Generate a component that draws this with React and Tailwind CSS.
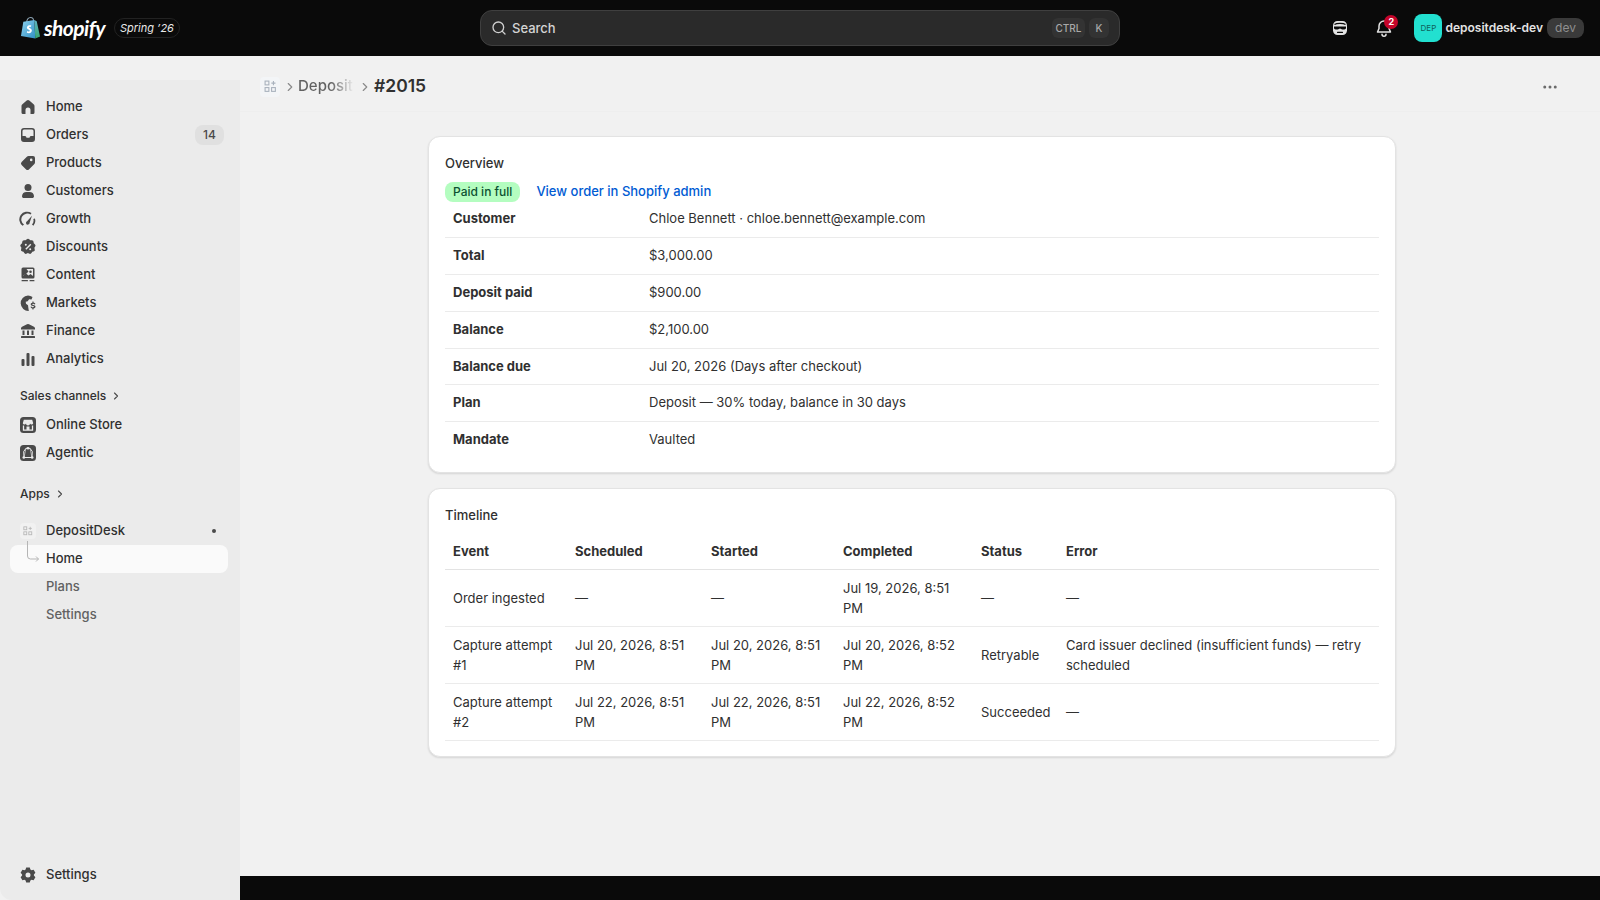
import { ChevronRight, MoreHorizontal, Search } from 'lucide-react';

const font = { fontFamily: 'Inter, "Liberation Sans", sans-serif' };

// Polaris-like icons, drawn by hand on a 20x20 box
function Ico({ children }) {
  return (
    <svg viewBox="0 0 20 20" className="w-5 h-5 shrink-0 text-[#4a4a4a]" fill="currentColor">
      {children}
    </svg>
  );
}

const icons = {
  home: <path d="M8.700 3.500a2 2 0 0 1 2.600 0l4.300 3.700c.6.500.9 1.100.9 1.900v6.400a1.500 1.500 0 0 1-1.500 1.500h-2.500v-3.900a2.500 2.500 0 0 0-5 0V17H5a1.500 1.500 0 0 1-1.500-1.500V9.100c0-.8.300-1.400.9-1.900z" />,
  orders: <path fillRule="evenodd" d="M6 3h8a3 3 0 0 1 3 3v8a3 3 0 0 1-3 3H6a3 3 0 0 1-3-3V6a3 3 0 0 1 3-3m-1.500 8v-5A1.500 1.500 0 0 1 6 4.500h8A1.500 1.500 0 0 1 15.500 6v5h-2.600a1 1 0 0 0-.9.600l-.3.600a1 1 0 0 1-.9.600H9.200a1 1 0 0 1-.9-.6l-.3-.6a1 1 0 0 0-.9-.6z" />,
  products: <path fillRule="evenodd" d="M10.500 3H15a2 2 0 0 1 2 2v4.500a2 2 0 0 1-.6 1.400l-5.500 5.500a2 2 0 0 1-2.800 0l-4.500-4.500a2 2 0 0 1 0-2.800l5.500-5.500a2 2 0 0 1 1.400-.6M13.200 8.200a1.300 1.300 0 1 0 0-2.600 1.300 1.300 0 0 0 0 2.600" />,
  customers: (
    <>
      <circle cx="10" cy="6.500" r="3.500" />
      <path d="M4 15.200c0-2.600 2-4.200 4.500-4.200h3c2.500 0 4.500 1.600 4.500 4.200 0 1-.8 1.800-1.800 1.800H5.800C4.800 17 4 16.200 4 15.200" />
    </>
  ),
  growth: (
    <>
      <path d="M4.600 16.800A7.400 7.400 0 0 1 13.500 4.100l-.9 1.500A5.700 5.700 0 0 0 6 15.600zM15.400 16.800l-1.400-1.200a5.700 5.700 0 0 0 1.300-5.600l1.600-.5a7.400 7.400 0 0 1-1.500 7.300" />
      <path d="M14 6.800l-2.400 6.900a1.800 1.800 0 1 1-2.500-1.500z" />
    </>
  ),
  discounts: (
    <path fillRule="evenodd" d="M8.500 2.500a2 2 0 0 1 3 0l.8.800 1.100-.1a2 2 0 0 1 2.200 1.900l.1 1.200.9.700a2 2 0 0 1 .4 2.900l-.7.900.4 1.100a2 2 0 0 1-1.300 2.600l-1.100.3-.6 1a2 2 0 0 1-2.800.7l-1-.6-1 .6a2 2 0 0 1-2.800-.7l-.6-1-1.100-.3a2 2 0 0 1-1.300-2.600l.4-1.100-.7-.9a2 2 0 0 1 .4-2.900l.9-.7.100-1.200a2 2 0 0 1 2.200-1.900l1.100.1zM12.300 6.800l-5 5 1 1 5-5zM7.800 8.800a1 1 0 1 0 0-2 1 1 0 0 0 0 2m4.400 4.400a1 1 0 1 0 0-2 1 1 0 0 0 0 2" />
  ),
  content: (
    <>
      <path fillRule="evenodd" d="M5 2.500h10A1.500 1.500 0 0 1 16.500 4v8a1.500 1.500 0 0 1-1.500 1.500H5A1.500 1.500 0 0 1 3.500 12V4A1.500 1.500 0 0 1 5 2.500M5 4v7l3-2.500 2.500 2 2-1.500 2.500 2V4zM12.500 8a1.300 1.300 0 1 0 0-2.600 1.300 1.300 0 0 0 0 2.600" />
      <path d="M5 4h3.500l2 2.500-2 2L5 11z" />
      <rect x="3.500" y="15" width="6.500" height="1.300" rx=".6" />
      <rect x="11.500" y="15" width="5" height="1.300" rx=".6" />
    </>
  ),
  markets: (
    <>
      <path d="M10 2.500a7.500 7.500 0 0 1 4.500 1.500l-1 2.400-2.400-.2-1.400 2-2 .5.300 2 2 1.600.3 2.200.5 3.400A7.500 7.500 0 1 1 10 2.500" />
      <path d="M15.500 8.500v1.100c1 .2 1.700.7 1.900 1.500l-1.200.4c-.2-.5-.5-.7-1.100-.7-.5 0-.9.200-.9.500 0 .4.400.5 1.100.7 1 .2 2.200.6 2.200 1.800 0 .9-.7 1.500-2 1.700v1h-1.100v-1c-1.100-.2-1.800-.8-2-1.700l1.200-.4c.2.600.6.900 1.300.9.600 0 1.100-.2 1.100-.5 0-.4-.5-.5-1.200-.7-1-.2-2.100-.6-2.100-1.800 0-.8.600-1.400 1.700-1.600V8.500z" />
    </>
  ),
  finance: (
    <>
      <path d="M9 3.200a2 2 0 0 1 2 0l5 2.600c.6.300 1 .9 1 1.500V8.500H3V7.300c0-.6.400-1.200 1-1.500z" />
      <rect x="4.500" y="9.500" width="2" height="4.500" />
      <rect x="9" y="9.500" width="2" height="4.500" />
      <rect x="13.500" y="9.500" width="2" height="4.500" />
      <rect x="3" y="15" width="14" height="2" rx=".5" />
    </>
  ),
  analytics: (
    <>
      <rect x="3.500" y="10" width="3" height="7" rx="1" />
      <rect x="8.500" y="4" width="3" height="13" rx="1" />
      <rect x="13.500" y="7" width="3" height="10" rx="1" />
    </>
  ),
  settings: (
    <path fillRule="evenodd" d="M8.200 2.500h3.600l.6 2.100 1.100.6 2.100-.5 1.800 3.100-1.500 1.600v1.200l1.500 1.600-1.800 3.100-2.100-.5-1.100.6-.6 2.100H8.200l-.6-2.100-1.100-.6-2.100.5-1.800-3.100 1.500-1.600V9.400L2.600 7.800l1.800-3.100 2.100.5 1.100-.6zM10 12.500a2.500 2.500 0 1 0 0-5 2.500 2.500 0 0 0 0 5" />
  ),
};

function StoreIcon() {
  return (
    <svg viewBox="0 0 20 20" className="w-5 h-5 shrink-0">
      <rect x="2" y="2" width="16" height="16" rx="3.500" fill="#4a4a4a" />
      <path d="M5.800 4.800h8.400l1 3.400a1.700 1.700 0 0 1-3.200.3 2 2 0 0 1-4 0 1.700 1.700 0 0 1-3.200-.3z" fill="#ebebeb" />
      <path d="M5.500 10.500v4.700h9v-4.700" fill="none" stroke="#ebebeb" strokeWidth="1.300" />
      <rect x="8.500" y="11.500" width="3" height="3.500" fill="#ebebeb" />
    </svg>
  );
}

function AgenticIcon() {
  return (
    <svg viewBox="0 0 20 20" className="w-5 h-5 shrink-0">
      <rect x="2" y="2" width="16" height="16" rx="3.500" fill="#4a4a4a" />
      <path d="M8 5.300h4l2.300 3.200-.3 6H6l-.3-6z" fill="none" stroke="#ebebeb" strokeWidth="1" />
      <path d="M8 5.300l-2 9M12 5.300l2 9" fill="none" stroke="#ebebeb" strokeWidth=".6" />
      <circle cx="10" cy="5.300" r="1.300" fill="#ebebeb" />
      <circle cx="5.800" cy="14.500" r="1.300" fill="#ebebeb" />
      <circle cx="14.200" cy="14.500" r="1.300" fill="#ebebeb" />
    </svg>
  );
}

// little squares-and-plus glyph used for the app tile
function AppGlyph({ color, size }) {
  return (
    <svg viewBox="0 0 12 12" width={size} height={size} fill="none" stroke={color} strokeWidth="1">
      <rect x="1" y="1" width="3.500" height="3.500" />
      <rect x="1" y="7" width="3.500" height="3.500" />
      <rect x="7" y="7" width="3.500" height="3.500" />
      <path d="M8.700 1v3.800M6.800 2.900h3.800" />
    </svg>
  );
}

function ShopifyBag() {
  return (
    <svg viewBox="0 0 22 24" className="w-[21px] h-[24px]">
      <defs>
        <linearGradient id="bagL" x1="0" y1="0" x2="1" y2="1">
          <stop offset="0" stopColor="#8fd3ee" />
          <stop offset="1" stopColor="#2f8fc4" />
        </linearGradient>
        <linearGradient id="bagR" x1="0" y1="0" x2="0" y2="1">
          <stop offset="0" stopColor="#5fb4c4" />
          <stop offset="1" stopColor="#39a56f" />
        </linearGradient>
      </defs>
      <path d="M7 6c0-3 1.800-5 4-5s3.500 2 3.500 5" fill="none" stroke="#8aa0b0" strokeWidth="1.100" />
      <path d="M3.500 5.500L15 3.500 16 23 1 20.500z" fill="url(#bagL)" />
      <path d="M15 3.500l2.500 1.500L21 21l-5 2z" fill="url(#bagR)" />
      <path d="M11.800 9.500c-.6-.4-1.300-.5-2-.4-1.700.2-2.700 1.400-2.600 2.600.2 2 3 2 3.100 3.200.1.700-.9 1.200-2.700.2l-.5 1.800c2.700 1.100 5.300.3 5.300-2.200 0-2.300-3-2.400-3-3.400 0-.5.800-.9 2-.3z" fill="#fff" />
    </svg>
  );
}

function FaceIcon() {
  return (
    <svg viewBox="0 0 20 20" className="w-5 h-5">
      <path d="M7.500 3h5C15 3 17 5 17 7.500v5c0 2.500-2 4.500-4.500 4.500h-5C5 17 3 15 3 12.500v-5C3 5 5 3 7.500 3" fill="#e3e3e3" />
      <path d="M4.500 6.500c2-1.600 9-1.600 11 0" fill="none" stroke="#0a0a0a" strokeWidth="1.200" />
      <path d="M4 8.500h12v1.300c0 1-.7 1.700-1.700 1.700h-2.100L10 10.600l-2.200.9H5.700C4.700 11.500 4 10.800 4 9.800z" fill="#0a0a0a" />
      <rect x="7" y="13.800" width="6" height="1.100" rx=".5" fill="#0a0a0a" />
    </svg>
  );
}

function BellIcon() {
  return (
    <svg viewBox="0 0 20 20" className="w-5 h-5" fill="none" stroke="#e3e3e3" strokeWidth="1.500">
      <path d="M10 3a5 5 0 0 0-5 5v2.500L3.500 14h13L15 10.500V8a5 5 0 0 0-5-5z" strokeLinejoin="round" />
      <path d="M8 16.200a2 2 0 0 0 4 0" strokeLinecap="round" />
    </svg>
  );
}

function NavItem({ icon, label, badge }) {
  return (
    <div className="h-7 flex items-center pl-[18px] pr-4 text-[13px] font-[450] text-[#303030]">
      <span className="w-[28px] flex">{icon}</span>
      <span className="flex-1">{label}</span>
      {badge && (
        <span className="-mt-px bg-[#e0e0e0] text-[#4a4a4a] text-xs rounded-lg w-[29px] h-5 flex items-center justify-center">
          {badge}
        </span>
      )}
    </div>
  );
}

function SectionLabel({ label }) {
  return (
    <div className="flex items-center gap-1 pl-5 text-xs font-[550] text-[#303030]">
      {label}
      <ChevronRight size={12} strokeWidth={2.25} className="text-[#4a4a4a]" />
    </div>
  );
}

const mainNav = [
  ['home', 'Home'],
  ['orders', 'Orders', '14'],
  ['products', 'Products'],
  ['customers', 'Customers'],
  ['growth', 'Growth'],
  ['discounts', 'Discounts'],
  ['content', 'Content'],
  ['markets', 'Markets'],
  ['finance', 'Finance'],
  ['analytics', 'Analytics'],
];

const overview = [
  ['Customer', 'Chloe Bennett · chloe.bennett@example.com'],
  ['Total', '$3,000.00'],
  ['Deposit paid', '$900.00'],
  ['Balance', '$2,100.00'],
  ['Balance due', 'Jul 20, 2026 (Days after checkout)'],
  ['Plan', 'Deposit — 30% today, balance in 30 days'],
  ['Mandate', 'Vaulted'],
];

const timeline = [
  ['Order ingested', '—', '—', 'Jul 19, 2026, 8:51 PM', '—', '—'],
  ['Capture attempt #1', 'Jul 20, 2026, 8:51 PM', 'Jul 20, 2026, 8:51 PM', 'Jul 20, 2026, 8:52 PM', 'Retryable', 'Card issuer declined (insufficient funds) — retry scheduled'],
  ['Capture attempt #2', 'Jul 22, 2026, 8:51 PM', 'Jul 22, 2026, 8:51 PM', 'Jul 22, 2026, 8:52 PM', 'Succeeded', '—'],
];

function Card({ title, children }) {
  return (
    <section className="bg-white rounded-xl px-4 pt-4 pb-[15px] last:pb-[15px] first:pb-[14px] border border-[#e3e3e3] shadow-[0_1px_2px_rgba(0,0,0,0.12)] -mx-px">
      <h2 className="text-[13px] leading-5 font-[550] text-[#303030]">{title}</h2>
      {children}
    </section>
  );
}

export default function App() {
  return (
    <div className="h-screen flex flex-col overflow-hidden bg-[#0a0a0a]" style={font}>
      {/* Top bar */}
      <header className="h-14 shrink-0 flex items-center pl-5 pr-4 relative">
        <ShopifyBag />
        <span className="ml-[3px] text-[21px] font-bold italic tracking-tight text-white" style={{ fontFamily: 'Lato, sans-serif' }}>
          shopify
        </span>
        <span className="ml-[9px] h-5 w-[66px] flex items-center justify-center rounded-full border border-[#222] text-[11px] font-[450] italic text-[#e8e8e8]">
          Spring ’26
        </span>
        <div className="absolute left-[480px] top-[10px] w-[640px] h-9 rounded-xl bg-[#2a2a2a] border border-[#3f3f3f] flex items-center pl-2.5 pr-2.5">
          <Search size={16} className="text-[#d0d0d0]" />
          <span className="ml-[5px] pt-0.5 flex-1 text-[13px] font-[450] text-[#d4d4d4]">Search</span>
          <span className="h-5 w-[33px] rounded-md bg-[#333] flex items-center justify-center text-[10px] font-[550] text-[#a8a8a8]">CTRL</span>
          <span className="ml-1 h-5 w-5 rounded-md bg-[#333] flex items-center justify-center text-[10px] font-[550] text-[#a8a8a8]">K</span>
        </div>
        <div className="ml-auto flex items-center">
          <FaceIcon />
          <div className="relative ml-6">
            <BellIcon />
            <span className="absolute -top-[3px] -right-[4px] w-3.5 h-3.5 rounded-full bg-[#c4052a] text-white text-[9px] font-bold flex items-center justify-center">2</span>
          </div>
          <span className="ml-[20px] w-7 h-7 rounded-lg bg-[#22e0d0] text-[#0f5f5a] text-[8px] flex items-center justify-center">DEP</span>
          <span className="ml-[3px] text-xs font-semibold text-[#e3e3e3]">depositdesk-dev</span>
          <span className="ml-1 h-5 w-[37px] rounded-lg bg-[#3a3a3a] text-[#8f8f8f] text-xs flex items-center justify-center">dev</span>
        </div>
      </header>

      <div className="flex-1 min-h-0 flex">
        {/* Sidebar */}
        <div className="w-60 shrink-0 pt-6 bg-[#f1f1f1] flex">
          <aside className="flex-1 bg-[#ebebeb] rounded-bl-xl pt-[13px] pb-[11px] flex flex-col">
            {mainNav.map(([key, label, badge]) => (
              <NavItem key={label} icon={<Ico>{icons[key]}</Ico>} label={label} badge={badge} />
            ))}
            <div className="mt-[15px] mb-[7px]"><SectionLabel label="Sales channels" /></div>
            <NavItem icon={<StoreIcon />} label="Online Store" />
            <NavItem icon={<AgenticIcon />} label="Agentic" />
            <div className="mt-[19px] mb-[15px]"><SectionLabel label="Apps" /></div>
            <div className="h-7 flex items-center pl-5 pr-4 text-[13px] font-[450] text-[#303030]">
              <span className="w-[26px] flex">
                <span className="w-4 h-4 rounded bg-[#f1f1f1] flex items-center justify-center">
                  <AppGlyph color="#b5b5b5" size={10} />
                </span>
              </span>
              <span className="flex-1">DepositDesk</span>
              <span className="w-1 h-1 rounded-full bg-[#4a4a4a] mr-2" />
            </div>
            <div className="relative ml-2.5 mr-3 h-7 rounded-lg bg-[#fafafa] flex items-center pl-[36px] text-[13px] font-[550] text-[#303030]">
              Home
              <svg viewBox="0 0 14 21" className="absolute left-[16px] -top-[4px] w-[14px] h-[21px]" fill="none" stroke="#b5b5b5" strokeWidth="1">
                <path d="M1.500 0v15a3 3 0 0 0 3 3h8M10 15.500l2.500 2.500-2.500 2.500" />
              </svg>
            </div>
            <div className="h-7 flex items-center pl-[46px] text-[13px] font-[450] text-[#616161]">Plans</div>
            <div className="h-7 flex items-center pl-[46px] text-[13px] font-[450] text-[#616161]">Settings</div>
            <div className="mt-auto"><NavItem icon={<Ico>{icons.settings}</Ico>} label="Settings" /></div>
          </aside>
        </div>

        {/* Main column */}
        <div className="flex-1 min-w-0 flex flex-col">
          <main className="flex-1 min-h-0 bg-[#f1f1f1]">
            <div className="h-14 flex items-center pl-5 pr-4 pt-1.5 border-b border-[#eeeeee]">
              <span className="w-5 h-5 rounded bg-[#f3f5f7] flex items-center justify-center">
                <AppGlyph color="#a9b2bd" size={13} />
              </span>
              <ChevronRight size={14} className="ml-[3px] text-[#8a8a8a]" />
              <span className="ml-px w-[59px] text-[15px] font-[450] bg-gradient-to-r from-[#616161] from-55% to-[#f1f1f1] to-95% bg-clip-text text-transparent">Deposit</span>
              <ChevronRight size={14} className="ml-px text-[#8a8a8a]" />
              <span className="ml-[2px] text-[17.5px] font-semibold text-[#303030]">#2015</span>
              <MoreHorizontal size={18} className="ml-auto mr-[25px] text-[#6b6b6b]" />
            </div>
            <div className="pr-4">
              <div className="w-[966px] mx-auto mt-6 flex flex-col gap-[15px]">
                <Card title="Overview">
                  <div className="mt-[9px] -mb-px h-5 flex items-center gap-4">
                    <span className="h-5 px-2 rounded-lg bg-[#b4fdc0] text-[#0c5132] text-xs font-[550] flex items-center">Paid in full</span>
                    <span className="text-[13px] font-[450] text-[#005bd3]">View order in Shopify admin</span>
                  </div>
                  <table className="w-full table-fixed border-collapse text-[13px] font-[440] text-[#303030]">
                    <tbody>
                      {overview.map(([k, v], i) => (
                        <tr key={k} className={i < overview.length - 1 ? 'border-b border-[#ebebeb]' : ''}>
                          <td className="w-[196px] h-[36.75px] px-2 font-[650]">{k}</td>
                          <td className="h-[36.75px] px-2">{v}</td>
                        </tr>
                      ))}
                    </tbody>
                  </table>
                </Card>
                <Card title="Timeline">
                  <table className="mt-2 w-full table-fixed border-collapse text-[13px] font-[440] leading-5 text-[#303030]">
                    <thead>
                      <tr className="border-b border-[#e3e3e3]">
                        <th className="w-[122px] h-9 px-2 text-left font-[650]">Event</th>
                        <th className="w-[136px] h-9 px-2 text-left font-[650]">Scheduled</th>
                        <th className="w-[132px] h-9 px-2 text-left font-[650]">Started</th>
                        <th className="w-[138px] h-9 px-2 text-left font-[650]">Completed</th>
                        <th className="w-[85px] h-9 px-2 text-left font-[650]">Status</th>
                        <th className="h-9 px-2 text-left font-[650]">Error</th>
                      </tr>
                    </thead>
                    <tbody>
                      {timeline.map((row) => (
                        <tr key={row[0]} className="border-b border-[#ebebeb]">
                          {row.map((c, i) => (
                            <td key={i} className="px-2 py-2">{c}</td>
                          ))}
                        </tr>
                      ))}
                    </tbody>
                  </table>
                </Card>
              </div>
            </div>
          </main>
          <div className="h-6 shrink-0 bg-[#0a0a0a]" />
        </div>
      </div>
    </div>
  );
}
